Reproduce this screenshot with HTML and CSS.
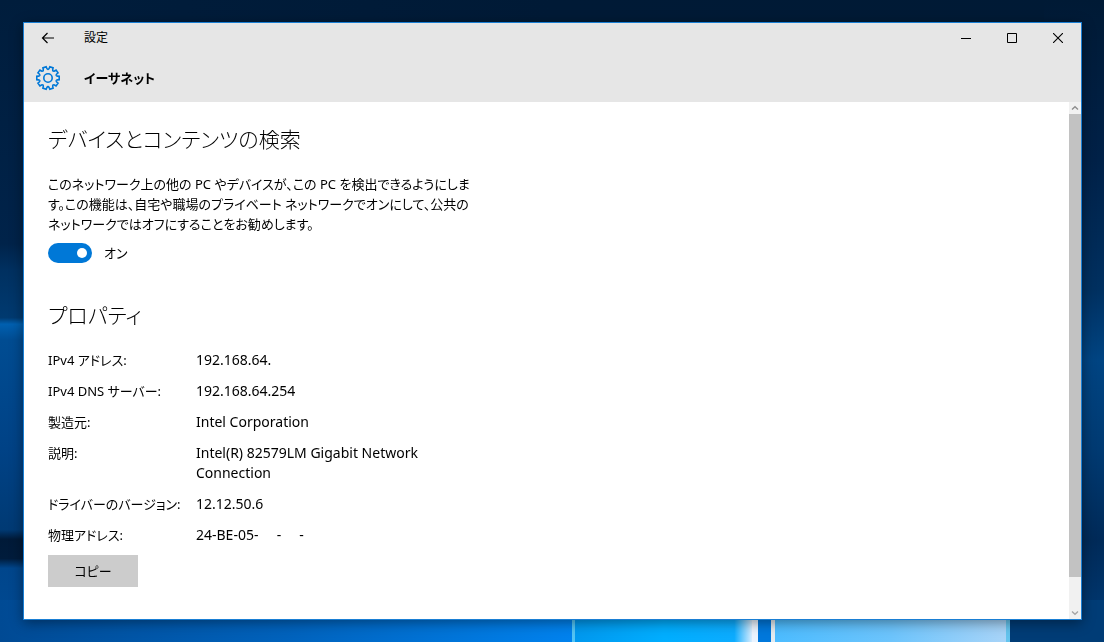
FILE: index.html
```html
<!DOCTYPE html>
<html lang="ja">
<head>
<meta charset="utf-8">
<meta name="viewport" content="width=device-width, initial-scale=1">
<title>設定</title>
<link rel="stylesheet" href="styles.css">
</head>
<body class="desktop">
<svg class="wallpaper" viewBox="0 0 1104 642" preserveAspectRatio="none" aria-hidden="true">
  <defs>
    <linearGradient id="top" x1="0" y1="0" x2="1" y2="0">
      <stop offset="0" stop-color="#001d3c"/><stop offset=".5" stop-color="#001a36"/><stop offset="1" stop-color="#001a35"/>
    </linearGradient>
    <linearGradient id="left" x1="0" y1="0" x2="0" y2="1">
      <stop offset="0" stop-color="#001d3c"/><stop offset=".38" stop-color="#00234a"/><stop offset=".42" stop-color="#003060"/><stop offset=".495" stop-color="#003a70"/><stop offset=".505" stop-color="#0060b0"/><stop offset=".53" stop-color="#004c92"/><stop offset=".7" stop-color="#004286"/><stop offset=".825" stop-color="#003a74"/><stop offset=".84" stop-color="#001a38"/><stop offset=".87" stop-color="#001c3c"/><stop offset=".885" stop-color="#00468c"/><stop offset="1" stop-color="#004a94"/>
    </linearGradient>
    <linearGradient id="right" x1="0" y1="0" x2="0" y2="1">
      <stop offset="0" stop-color="#001a35"/><stop offset=".25" stop-color="#002148"/><stop offset=".45" stop-color="#003060"/><stop offset=".56" stop-color="#004482"/><stop offset=".7" stop-color="#003a72"/><stop offset=".84" stop-color="#002a58"/><stop offset="1" stop-color="#003c78"/>
    </linearGradient>
    <linearGradient id="floor" x1="0" y1="0" x2="1" y2="0">
      <stop offset="0" stop-color="#004a94"/><stop offset=".5" stop-color="#0062bc"/><stop offset="1" stop-color="#0082ee"/>
    </linearGradient>
    <linearGradient id="pane1" x1="0" y1="0" x2="1" y2="0">
      <stop offset="0" stop-color="#0098ee"/><stop offset=".5" stop-color="#00aeff"/><stop offset=".9" stop-color="#0cacff"/><stop offset="1" stop-color="#d8edff"/>
    </linearGradient>
    <linearGradient id="pane2" x1="0" y1="0" x2="1" y2="0">
      <stop offset="0" stop-color="#4cbcff"/><stop offset=".5" stop-color="#6cc4fc"/><stop offset="1" stop-color="#a8d4f8"/>
    </linearGradient>
  </defs>
  <rect width="1104" height="642" fill="url(#top)"/>
  <rect width="60" height="642" fill="url(#left)"/>
  <rect x="1044" width="60" height="642" fill="url(#right)"/>
  <rect y="600" width="572" height="42" fill="url(#floor)"/>
  <rect x="572" y="600" width="3" height="42" fill="#54c4f4"/>
  <rect x="575" y="600" width="177" height="42" fill="url(#pane1)"/>
  <rect x="752" y="600" width="6" height="42" fill="#eaf4ff"/>
  <rect x="758" y="600" width="13" height="42" fill="#0078dc"/>
  <rect x="771" y="600" width="4" height="42" fill="#e4ebf0"/>
  <rect x="775" y="600" width="231" height="42" fill="url(#pane2)"/>
  <rect x="1006" y="600" width="4" height="42" fill="#64c4ee"/>
  <rect x="1010" y="600" width="94" height="42" fill="#003c76"/>
</svg>

<div class="window">
  <header class="window-head">
    <div class="titlebar">
      <button class="back" type="button" aria-label="戻る">
        <svg width="14" height="12" viewBox="0 0 14 12"><path d="M13 6H1.5M6.5 1 1.5 6l5 5" fill="none" stroke="#000" stroke-width="1.2"/></svg>
      </button>
      <span class="app-name">設定</span>
      <div class="caption-buttons">
        <button class="caption" type="button" aria-label="最小化"><svg width="10" height="10" viewBox="0 0 10 10"><path d="M0 5.5h10" stroke="#000"/></svg></button>
        <button class="caption" type="button" aria-label="最大化"><svg width="10" height="10" viewBox="0 0 10 10"><path d="M.5.5h9v9h-9z" fill="none" stroke="#000"/></svg></button>
        <button class="caption" type="button" aria-label="閉じる"><svg width="10" height="10" viewBox="0 0 10 10"><path d="m0 0 10 10M10 0 0 10" stroke="#000" stroke-width="1.1"/></svg></button>
      </div>
    </div>
    <div class="page-title">
      <svg class="gear" width="26" height="26" viewBox="-13 -13 26 26" fill="none" stroke="#0078d7" stroke-width="1.6" aria-hidden="true">
        <defs><path id="tooth" d="M-2.8-8.2Q-2-8.5-1.9-9.4L-1.7-11.2H1.7L1.9-9.4Q2-8.5 2.8-8.2"/></defs>
        <use href="#tooth" transform="rotate(18)"/><use href="#tooth" transform="rotate(54)"/>
        <use href="#tooth" transform="rotate(90)"/><use href="#tooth" transform="rotate(126)"/>
        <use href="#tooth" transform="rotate(162)"/><use href="#tooth" transform="rotate(198)"/>
        <use href="#tooth" transform="rotate(234)"/><use href="#tooth" transform="rotate(270)"/>
        <use href="#tooth" transform="rotate(306)"/><use href="#tooth" transform="rotate(342)"/>
        <circle r="4.2"/>
      </svg>
      <h1>イーサネット</h1>
    </div>
  </header>

  <div class="window-body">
    <main class="content">
      <section class="discovery">
        <h2>デバイスとコンテンツの検索</h2>
        <p>このネットワーク上の他の PC やデバイスが、この PC を検出できるようにしま<br>す。この機能は、自宅や職場のプライベート ネットワークでオンにして、公共の<br>ネットワークではオフにすることをお勧めします。</p>
        <label class="toggle"><input type="checkbox" role="switch" checked>オン</label>
      </section>
      <section class="properties">
        <h2>プロパティ</h2>
        <table>
          <tr><th scope="row">IPv4 アドレス:</th><td>192.168.64.</td></tr>
          <tr><th scope="row">IPv4 DNS サーバー:</th><td>192.168.64.254</td></tr>
          <tr><th scope="row">製造元:</th><td>Intel Corporation</td></tr>
          <tr><th scope="row">説明:</th><td>Intel(R) 82579LM Gigabit Network<br>Connection</td></tr>
          <tr><th scope="row">ドライバーのバージョン:</th><td>12.12.50.6</td></tr>
          <tr><th scope="row">物理アドレス:</th><td>24-BE-05-&nbsp;&nbsp;&nbsp;&nbsp; -&nbsp;&nbsp;&nbsp;&nbsp; -</td></tr>
        </table>
        <button class="copy" type="button">コピー</button>
      </section>
    </main>
    <div class="scrollbar" aria-hidden="true">
      <svg width="12" height="12" viewBox="0 0 12 12"><path d="M3 7.5 6 4.7l3 2.8" fill="none" stroke="#8c8c8c" stroke-width="1.3"/></svg>
      <div class="track"><div class="thumb"></div></div>
      <svg width="12" height="12" viewBox="0 0 12 12"><path d="m3 4.5 3 2.8 3-2.8" fill="none" stroke="#a4a4a4" stroke-width="1.3"/></svg>
    </div>
  </div>
</div>
</body>
</html>
```

FILE: styles.css
```css
* {
  box-sizing: border-box;
}

.desktop {
  display: flex;
  min-height: 100vh;
  margin: 0;
  padding: 22px 22px 22px 23px;
  background: #001d3c;
  color: #000;
  font: 13px/20px "Noto Sans", "Noto Sans CJK JP", sans-serif;
  font-feature-settings: "palt";
}

.wallpaper {
  position: fixed;
  inset: 0;
  z-index: -1;
  width: 100%;
  height: 100%;
}

.window {
  display: flex;
  flex: 1;
  flex-direction: column;
  min-width: 0;
  border: 1px solid #1a7fd4;
  background: #fff;
  box-shadow: 0 3px 12px rgba(0, 0, 0, 0.4);
}

.window-head {
  background: #e6e6e6;
}

.titlebar {
  display: flex;
  align-items: center;
  height: 30px;
}

.back,
.caption {
  display: grid;
  place-items: center;
  height: 30px;
  padding: 0;
  border: 0;
  background: none;
}

.back {
  width: 48px;
}

.app-name {
  margin-left: 12px;
  font-size: 12px;
}

.caption-buttons {
  display: flex;
  margin-left: auto;
}

.caption {
  width: 46px;
}

.page-title {
  display: flex;
  align-items: center;
  gap: 23px;
  height: 49px;
  padding-left: 11px;
}

h1,
h2,
p {
  margin: 0;
}

h1 {
  font-size: 13px;
  font-weight: 700;
  line-height: 20px;
}

h2 {
  font-family: "Noto Sans CJK JP", sans-serif;
  font-size: 21px;
  font-weight: 300;
  line-height: 28px;
}

.window-body {
  display: flex;
  flex: 1;
}

.content {
  flex: 1;
  padding: 22px 24px 32px;
}

.discovery p {
  margin: 22px 0 9px;
}

.toggle {
  display: inline-flex;
  align-items: center;
  gap: 12px;
}

.toggle input {
  display: flex;
  align-items: center;
  justify-content: flex-end;
  width: 44px;
  height: 20px;
  margin: 0;
  padding: 5px;
  border-radius: 10px;
  background: #0078d7;
  appearance: none;
}

.toggle input::before {
  width: 10px;
  height: 10px;
  border-radius: 50%;
  background: #fff;
  content: "";
}

.toggle input:not(:checked) {
  justify-content: flex-start;
  background: #767676;
}

.properties {
  margin-top: 37px;
}

table {
  margin-top: 22px;
  border-collapse: collapse;
}

th,
td {
  padding: 0 0 11px;
  text-align: left;
  vertical-align: top;
}

th {
  width: 148px;
  font-weight: 400;
}

td {
  font-size: 14px;
}

tr:last-child > * {
  padding-bottom: 10px;
}

.copy {
  display: block;
  width: 90px;
  height: 32px;
  padding: 0;
  border: 0;
  background: #ccc;
  color: #000;
  font: inherit;
  font-feature-settings: inherit;
}

.scrollbar {
  display: flex;
  flex-direction: column;
  width: 12px;
  background: #f1f1f1;
}

.track {
  flex: 1;
}

.thumb {
  height: 94%;
  background: #c2c2c2;
}
```
